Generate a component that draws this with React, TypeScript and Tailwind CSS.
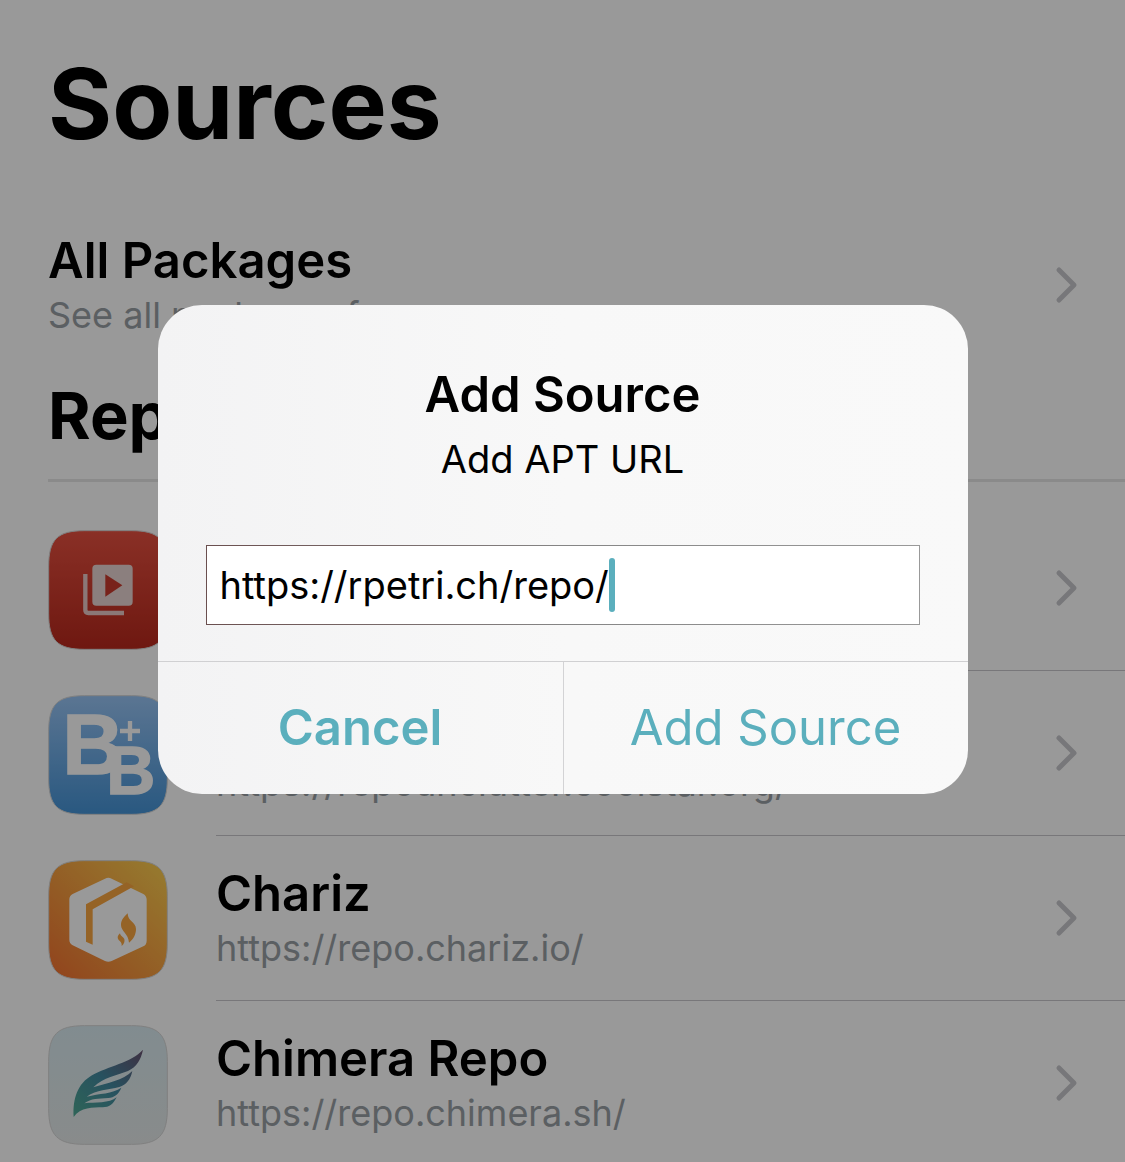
import type { ReactNode } from "react";

function Squircle({ children, from, to, id, diagonal }: { children: ReactNode; from: string; to: string; id: string; diagonal?: boolean }) {
  return (
    <svg viewBox="54 30 360 360" className="size-[120px] shrink-0" aria-hidden="true">
      <defs>
        <linearGradient id={id} x1="0" y1={diagonal ? "1" : "0"} x2={diagonal ? "1" : "0"} y2={diagonal ? "0" : "1"}>
          <stop offset="0" stopColor={from} />
          <stop offset="1" stopColor={to} />
        </linearGradient>
      </defs>
      <path
        d="M56 140C56 58 82 32 164 32H304C386 32 412 58 412 140V280C412 362 386 388 304 388H164C82 388 56 362 56 280Z"
        fill={`url(#${id})`}
        stroke="#d5d5d5"
        strokeWidth="3"
      />
      {children}
    </svg>
  );
}

function VideoIcon() {
  return (
    <Squircle id="video" from="#e65040" to="#b8281c">
      <path d="M166 162V270Q166 279 175 279H282" fill="none" stroke="#e8c8c6" strokeWidth="13" />
      <rect x="187" y="134" width="121" height="123" rx="12" fill="#e8d4d2" />
      <path d="M226 163L277 196L226 230Z" fill="#c93a2d" />
    </Squircle>
  );
}

function BigBossIcon() {
  return (
    <Squircle id="bigboss" from="#98c4f4" to="#4593d6">
      <g fill="#fff" stroke="#fff" strokeWidth="4" fontFamily="Liberation Sans, Arial, sans-serif" fontWeight="700">
        <text x="97" y="268" fontSize="256">B</text>
        <text x="229" y="326" fontSize="204">B</text>
      </g>
      <path d="M300 108V168M270 138H330" stroke="#fff" strokeWidth="13" />
    </Squircle>
  );
}

function CharizIcon() {
  return (
    <Squircle id="chariz" from="#f27030" to="#fbd050" diagonal>
      <path
        d="M225 86Q235 81 245 86L340 132Q350 138 350 149V272Q350 284 340 289L245 333Q235 338 225 333L128 286Q118 280 118 269V148Q118 138 128 132Z"
        fill="#fff"
      />
      <path d="M290 97L168 163V275L188 284V178L312 109Z" fill="#f9a540" />
      <path d="M293 190C278 204 273 213 273 225C273 244 295 250 297 278C311 268 318 252 318 237C318 216 293 215 293 190Z" fill="#f9a540" />
      <path d="M270 250C262 257 261 264 266 270C272 275 276 279 275 288C282 282 285 275 283 267C280 260 271 259 270 250Z" fill="#f9a540" />
    </Squircle>
  );
}

function ChimeraIcon() {
  return (
    <Squircle id="chimera" from="#d8eaf0" to="#e4e8e8">
      <defs>
        <linearGradient id="wing" x1="0" y1="1" x2="1" y2="0">
          <stop offset="0" stopColor="#4ea892" />
          <stop offset="0.5" stopColor="#42889f" />
          <stop offset="1" stopColor="#68506f" />
        </linearGradient>
      </defs>
      <path
        d="M131 306C128 250 143 206 186 181C232 154 304 143 339 104C332 136 320 155 294 168C260 182 222 186 190 217C232 203 279 197 307 168C302 193 289 210 268 216C235 225 200 223 170 245C208 235 247 237 274 218C265 239 253 247 235 249C205 251 184 250 163 265C195 261 238 266 260 247C248 269 238 277 218 277C190 277 151 277 131 306Z"
        fill="url(#wing)"
      />
    </Squircle>
  );
}

function Chevron() {
  return (
    <svg viewBox="0 0 24 40" className="h-10 w-6 shrink-0" aria-hidden="true">
      <path d="M4 5L19 20L4 35" fill="none" stroke="#c7c7cc" strokeWidth="5" strokeLinecap="round" strokeLinejoin="round" />
    </svg>
  );
}

function Labels({ title, detail }: { title?: string; detail?: string }) {
  return (
    <span className="min-w-0 flex-1">
      <span className="block h-[60px] truncate text-[49px] leading-[60px] font-semibold text-black">{title}</span>
      <span className="block h-12 truncate text-[36px] leading-[48px] text-[#989ea4]">{detail}</span>
    </span>
  );
}

const repos = [
  { id: "video", icon: <VideoIcon /> },
  { id: "bigboss", detail: "https://repounclutter.coolstar.org/", icon: <BigBossIcon /> },
  { id: "chariz", title: "Chariz", detail: "https://repo.chariz.io/", icon: <CharizIcon /> },
  { id: "chimera", title: "Chimera Repo", detail: "https://repo.chimera.sh/", icon: <ChimeraIcon /> },
];

export default function App() {
  return (
    <div className="relative h-screen overflow-hidden bg-white font-['Inter',sans-serif]">
      <main className="pt-11 pl-12">
        <h1 className="text-[98px] leading-[120px] font-bold text-black">Sources</h1>
        <a href="#all" className="mt-[67px] flex items-center pr-[46px]">
          <Labels title="All Packages" detail="See all packages from every source" />
          <Chevron />
        </a>
        <h2 className="mt-[37px] border-b-[3px] border-[#e6e6e6] pb-[23px] text-[65px] leading-[80px] font-bold text-black">Repos</h2>
        <ul className="mt-6">
          {repos.map((repo) => (
            <li key={repo.id}>
              <a href={`#${repo.id}`} aria-label={repo.title ?? repo.id} className="flex">
                <span className="flex w-[168px] shrink-0 items-center pt-0.5">{repo.icon}</span>
                <span className="flex h-[165px] min-w-0 flex-1 items-center border-b border-[#c8c7cc] pr-[46px]">
                  <Labels title={repo.title} detail={repo.detail} />
                  <Chevron />
                </span>
              </a>
            </li>
          ))}
        </ul>
      </main>

      <div className="absolute inset-0 flex items-start justify-center bg-black/40 px-12 pt-[305px]">
        <form
          role="dialog"
          aria-labelledby="dialog-title"
          className="w-full max-w-[810px] overflow-hidden rounded-[44px] bg-linear-to-r from-[#f3f3f4] via-[#f8f8f8] to-[#f9f9f9]"
          onSubmit={(event) => event.preventDefault()}
        >
          <div className="px-12 pt-[60px] pb-9 text-center text-black">
            <h3 id="dialog-title" className="text-[49px] leading-[60px] font-semibold">Add Source</h3>
            <label htmlFor="apt-url" className="mt-2.5 block text-[38px] leading-[48px]">Add APT URL</label>
            <div className="relative mt-[62px] bg-linear-to-r from-[#6a4f4f] via-[#858585] to-[#999999] p-px">
              <input
                id="apt-url"
                type="text"
                defaultValue="https://rpetri.ch/repo/"
                className="block h-[78px] w-full bg-white px-[13px] text-[38px] text-black outline-none"
              />
              <span className="absolute top-[13px] left-[403px] h-[54px] w-[6px] rounded-full bg-[#5bafbd]" />
            </div>
          </div>
          <div className="grid grid-cols-2 border-t border-[#d0d0d2] text-[49px] leading-[60px] text-[#5bafbd]">
            <button type="button" className="h-[132px] font-semibold">Cancel</button>
            <button type="submit" className="h-[132px] border-l border-[#d3d3d5]">Add Source</button>
          </div>
        </form>
      </div>
    </div>
  );
}
